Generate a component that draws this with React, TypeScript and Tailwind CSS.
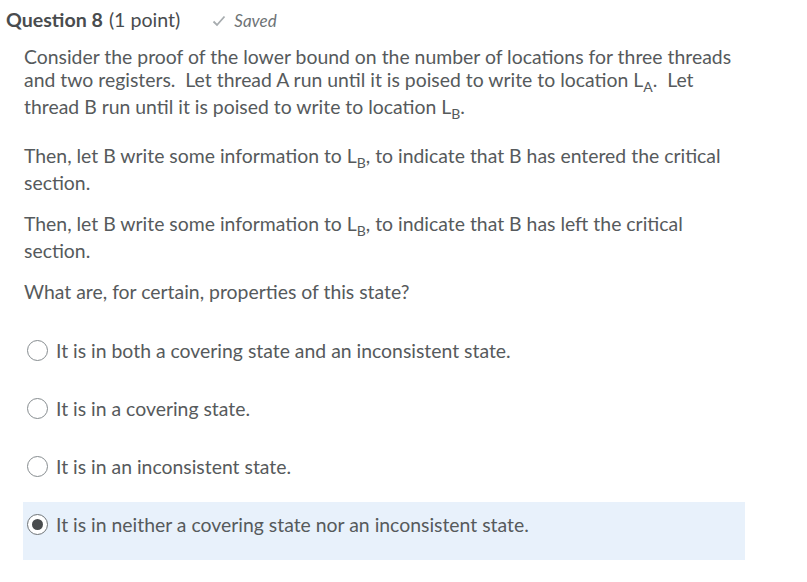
import React from "react";

const Sub = ({ children }: { children: React.ReactNode }) => (
  <span className="align-sub text-[14px] leading-[17px]">{children}</span>
);

const options = [
  "It is in both a covering state and an inconsistent state.",
  "It is in a covering state.",
  "It is in an inconsistent state.",
  "It is in neither a covering state nor an inconsistent state.",
];

export default function App() {
  return (
    <div
      className="w-[807px] h-[582px] bg-white text-[#565a5c] overflow-hidden"
      style={{ fontFamily: "Lato, 'Open Sans', sans-serif" }}
    >
      <div className="flex items-baseline pl-[6px] pt-[6px]">
        <span className="text-[19.6px] font-bold text-[#494c4e] leading-[28px]">Question 8</span>
        <span className="text-[19.6px] text-[#494c4e] ml-[6px] leading-[28px]">(1 point)</span>
        <span className="ml-[32px] flex items-baseline text-[17px] italic text-[#6e7376]">
          <svg width="14" height="12" viewBox="0 0 14 12" className="mr-[8px] self-center">
            <path d="M1.5 6.5 L5 10 L12.5 1.5" fill="none" stroke="#a7acaf" strokeWidth="1.8" />
          </svg>
          Saved
        </span>
      </div>
      <div className="pl-[24px] pr-[60px] text-[19.4px] leading-[23px]">
        <p className="mt-[11px]">
          Consider the proof of the lower bound on the number of locations for three threads and two registers.&nbsp; Let thread A run until it is poised to write to location L<Sub>A</Sub>.&nbsp; Let thread B run until it is poised to write to location L<Sub>B</Sub>.
        </p>
        <p className="mt-[22px]">
          Then, let B write some information to L<Sub>B</Sub>, to indicate that B has entered the critical section.
        </p>
        <p className="mt-[18px]">
          Then, let B write some information to L<Sub>B</Sub>, to indicate that B has left the critical section.
        </p>
        <p className="mt-[18px]">What are, for certain, properties of this state?</p>
      </div>
      <div className="mt-[25px] ml-[23px] w-[722px]">
        {options.map((o, i) => {
          const sel = i === 3;
          return (
            <div
              key={i}
              className={`h-[58px] flex items-start pt-[12px] pl-[4px] ${sel ? "bg-[#e8f1fb]" : ""}`}
            >
              <span
                className={`w-[21px] h-[21px] rounded-full border bg-white flex items-center justify-center shrink-0 ${
                  sel ? "border-[#6e7376] border-[1.5px]" : "border-[#868c8f]"
                }`}
              >
                {sel && <span className="w-[11px] h-[11px] rounded-full bg-[#494c4e]" />}
              </span>
              <span className="ml-[8px] text-[19.4px] leading-[23px] -mt-[1px]">{o}</span>
            </div>
          );
        })}
      </div>
    </div>
  );
}
